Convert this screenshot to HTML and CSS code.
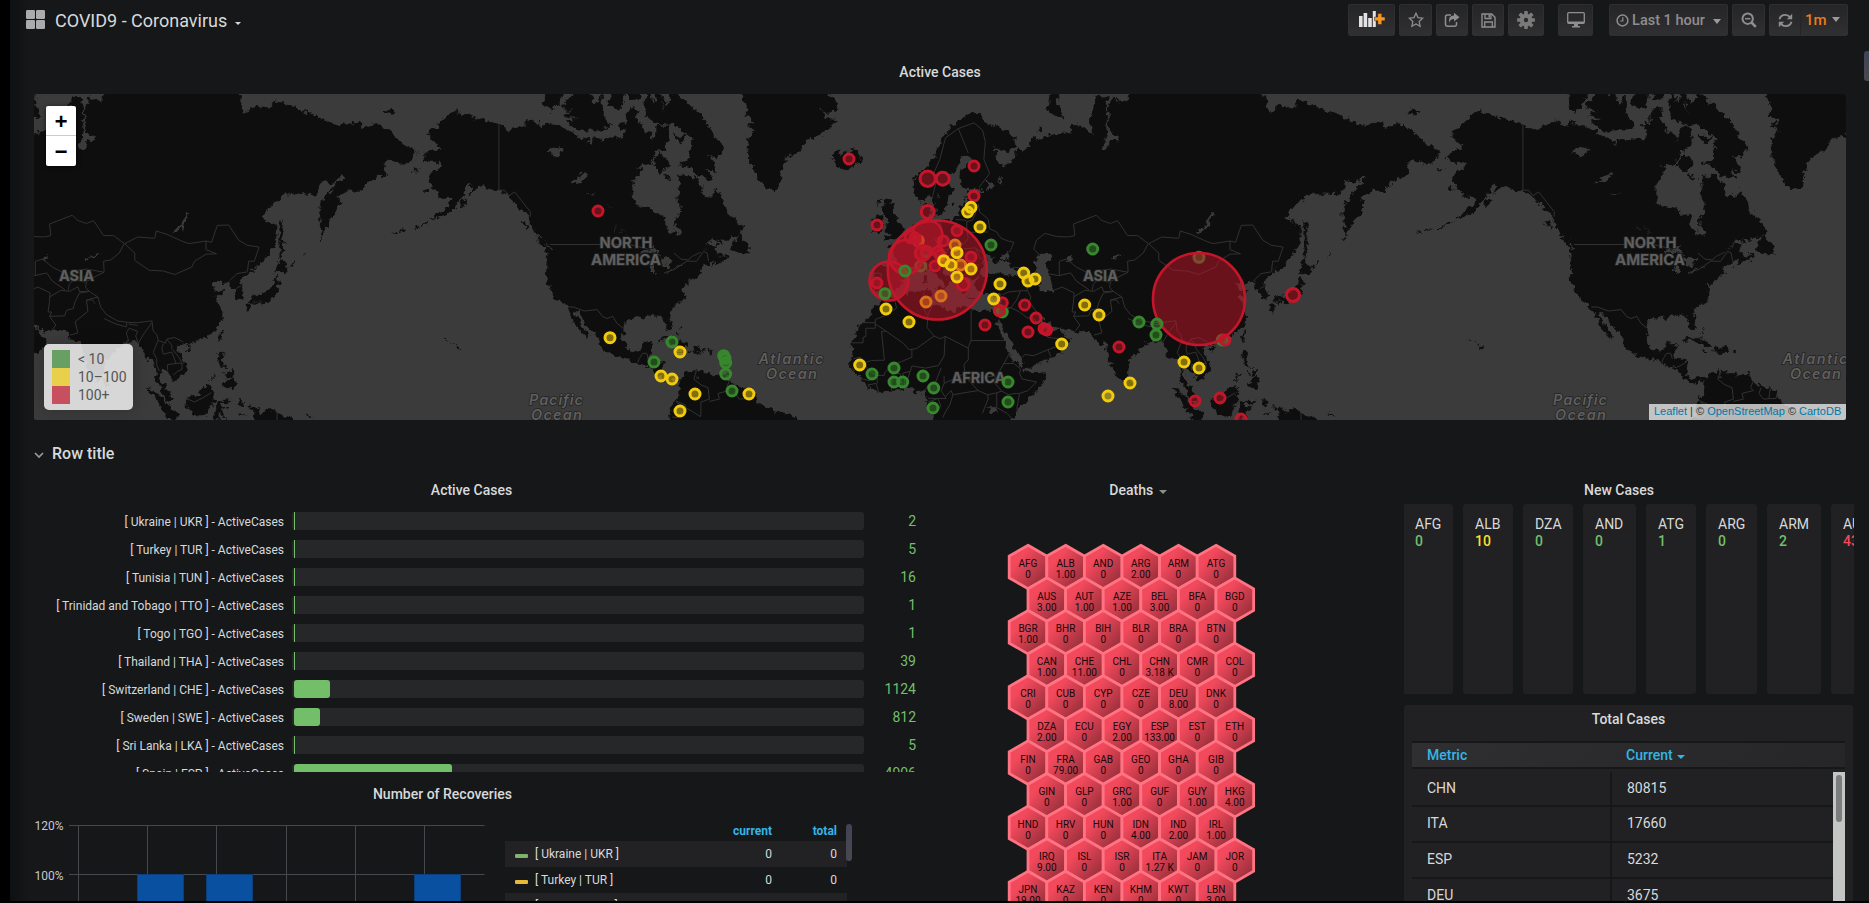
FILE: index.html
```html
<!DOCTYPE html>
<html lang="en">
<head>
<meta charset="utf-8">
<title>COVID9 - Coronavirus</title>
<link rel="stylesheet" href="styles.css">
</head>
<body>
<div class="app">
  <header class="navbar">
    <svg class="grid-icon" viewBox="0 0 19 19"><rect width="9" height="9" rx="1.2"/><rect x="10" width="9" height="9" rx="1.2"/><rect y="10" width="9" height="9" rx="1.2"/><rect x="10" y="10" width="9" height="9" rx="1.2"/></svg>
    <span class="dash-title">COVID9 - Coronavirus</span><i class="caret caret-title"></i>
    <nav class="tools">
      <button class="btn w47"><svg width="26" height="18" viewBox="0 0 26 18"><g fill="#e3e3e3"><rect x="0" y="5" width="3.6" height="11"/><rect x="4.6" y="2" width="3.6" height="14"/><rect x="9.2" y="7" width="3.6" height="9"/><rect x="13.8" y="0" width="3" height="16"/></g><path d="M18.800 2.500h4v3.500h3.200v3.800h-3.200v3.700h-4v-3.700h-3.300v-3.800h3.300z" fill="#f79520" stroke="#29292b" stroke-width=".5"/></svg></button>
      <button class="btn w33"><svg width="16" height="16" viewBox="0 0 16 16"><path d="M8 1.300l2 4.300 4.700.6-3.500 3.300.9 4.700L8 11.900l-4.100 2.300.9-4.700L1.300 6.200 6 5.600z" fill="none" stroke="#8e8e8e" stroke-width="1.300"/></svg></button>
      <button class="btn w32"><svg width="16" height="16" viewBox="0 0 16 16"><path d="M7 3H3.500Q1.500 3 1.500 5v7.200q0 2 2 2h7q2 0 2-2V10" fill="none" stroke="#8e8e8e" stroke-width="1.500"/><path d="M10 .8l5.500 4.400L10 9.600V7Q6 6.800 5.500 11 3.500 4 10 3.600z" fill="#8e8e8e"/></svg></button>
      <button class="btn w32"><svg width="15" height="15" viewBox="0 0 15 15"><path d="M1 1h9.700L14 4.300V14H1z" fill="none" stroke="#8e8e8e" stroke-width="1.400"/><path d="M4 1v4.500h6V1M3.700 14V9h7.600v5" fill="none" stroke="#8e8e8e" stroke-width="1.300"/><path d="M7.500 1.500h1.500V4.500h-1.500z" fill="#8e8e8e"/></svg></button>
      <button class="btn w36"><svg width="18" height="18" viewBox="-9 -9 18 18"><g fill="#7b7b7b"><circle r="6.300"/><g id="tooth"><rect x="-1.800" y="-8.900" width="3.600" height="17.800" rx=".6"/><rect x="-8.900" y="-1.800" width="17.800" height="3.600" rx=".6"/></g><use href="#tooth" transform="rotate(45)"/></g><circle r="2.200" fill="#2c2c2e"/></svg></button>
      <button class="btn w35"><svg width="18" height="16" viewBox="0 0 18 16"><rect x=".7" y=".7" width="16.600" height="10.600" rx="1" fill="none" stroke="#8e8e8e" stroke-width="1.300"/><path d="M1 9.500h16v2H1zM7 12h4v2h2v1.400H5V14h2z" fill="#8e8e8e"/></svg></button>
      <button class="btn w119"><svg width="13" height="13" viewBox="0 0 13 13"><circle cx="6.500" cy="6.500" r="5.400" fill="none" stroke="#8e8e8e" stroke-width="1.500"/><path d="M6.800 3.300v3.700H4.200" fill="none" stroke="#8e8e8e" stroke-width="1.200"/></svg><span class="range">Last 1 hour</span><i class="caret caret-range"></i></button>
      <button class="btn w33"><svg width="16" height="16" viewBox="0 0 16 16"><circle cx="6.700" cy="6.700" r="5.200" fill="none" stroke="#8e8e8e" stroke-width="2"/><path d="M10.500 10.500l4.300 4.300" stroke="#8e8e8e" stroke-width="2.600"/><path d="M4 6.700h5.400" stroke="#8e8e8e" stroke-width="1.500"/></svg></button>
      <div class="btn refresh"><span class="refresh-icon"><svg width="15" height="15" viewBox="0 0 15 15"><path d="M1.500 6.200Q2.600 1.900 7.300 1.900q2.800 0 4.700 2.200M13.500 8.800q-1.100 4.300-5.800 4.300-2.800 0-4.700-2.200" fill="none" stroke="#8e8e8e" stroke-width="1.900"/><path d="M14.200.8v5.400H8.800zM.8 14.200V8.800h5.400z" fill="#8e8e8e"/></svg></span><span class="interval">1m<i class="caret caret-range"></i></span></div>
    </nav>
  </header>

  <section class="map-panel">
    <h2 class="panel-title">Active Cases</h2>
    <div class="map">
      <svg id="map" width="1812" height="326" viewBox="34 94 1812 326"></svg>
      <div class="zoom"><span>+</span><span>−</span></div>
      <div class="map-legend"><div><i class="g"></i>&lt; 10</div><div><i class="y"></i>10–100</div><div><i class="r"></i>100+</div></div>
      <div class="attribution"><a>Leaflet</a> | © <a>OpenStreetMap</a> © <a>CartoDB</a></div>
    </div>
  </section>

  <div class="row-title"><svg width="10" height="7" viewBox="0 0 10 7"><path d="M1 1l4 4 4-4" fill="none" stroke="#9a9a9a" stroke-width="1.700"/></svg><span>Row title</span></div>

  <main class="panels">
    <div class="col-left">
      <h2 class="panel-title">Active Cases</h2>
      <div class="gauges" id="gauges"></div>
      <h2 class="panel-title recov-title">Number of Recoveries</h2>
      <div class="recoveries">
        <svg width="460" height="86" viewBox="30 816 460 86" class="graph">
          <g stroke="#47484b" stroke-width="1"><path d="M69 825.500H484.500M69 874.500H484.500M78.500 825V902M147.500 825V902M216.500 825V902M286.500 825V902M355.500 825V902M424.500 825V902"/></g>
          <g fill="#0a50a1" stroke="#0b3f7d"><path d="M137.500 874.500h46V904h-46zM206.500 874.500h46V904h-46zM414.500 874.500h46V904h-46z"/></g>
          <text x="63.500" y="829.500" text-anchor="end">120%</text><text x="63.500" y="879.500" text-anchor="end">100%</text>
        </svg>
        <div class="series">
          <div class="series-head"><span></span><b>current</b><b>total</b></div>
          <div class="series-row odd"><i class="dash green"></i><span>[ Ukraine | UKR ]</span><em>0</em><em>0</em></div>
          <div class="series-row"><i class="dash yellow"></i><span>[ Turkey | TUR ]</span><em>0</em><em>0</em></div>
          <div class="series-row odd"><i class="dash blue"></i><span>[ Tunisia | TUN ]</span><em>0</em><em>0</em></div>
        </div>
        <div class="series-scroll"></div>
      </div>
    </div>

    <div class="col-mid">
      <h2 class="panel-title">Deaths <i class="caret caret-panel"></i></h2>
      <svg id="hexes" width="260" height="370" viewBox="1000 533 260 370"></svg>
    </div>

    <div class="col-right">
      <h2 class="panel-title">New Cases</h2>
      <div class="cards">
        <div class="card c50">AFG<b>0</b></div><div class="card c50">ALB<b class="mid">10</b></div><div class="card c50">DZA<b>0</b></div><div class="card c53">AND<b>0</b></div><div class="card c50">ATG<b>1</b></div><div class="card c51">ARG<b>0</b></div><div class="card c54">ARM<b>2</b></div><div class="card c54">AUT<b class="high">431</b></div>
      </div>
      <div class="totals">
        <h2 class="panel-title">Total Cases</h2>
        <div class="thead"><span>Metric</span><span>Current<i class="caret caret-sort"></i></span></div>
        <div class="tbody">
          <div class="trows">
            <div class="trow"><span>CHN</span><span>80815</span></div>
            <div class="trow"><span>ITA</span><span>17660</span></div>
            <div class="trow"><span>ESP</span><span>5232</span></div>
            <div class="trow"><span>DEU</span><span>3675</span></div>
          </div>
          <div class="tscroll"><i></i></div>
        </div>
      </div>
    </div>
  </main>
  <div class="page-scroll"></div>
  <div class="bottom-edge"></div>
</div>
<script src="app.js"></script>
</body>
</html>
```

FILE: styles.css
```css
* { box-sizing: border-box; }
html, body { margin: 0; height: 100%; background: #000; overflow: hidden; }
body { font-family: Roboto, "Noto Sans", sans-serif; font-size: 14px; color: #d8d9da; }
.app {
  position: relative; width: 1869px; height: 903px; overflow: hidden;
  padding-left: 34px; display: flex; flex-direction: column;
  background: linear-gradient(90deg, #000 10px, #0f1011 10px, #161719 30px);
}
.navbar { flex: none; height: 60px; padding: 4px 21px 0 0; margin-left: -8px; display: flex; align-items: flex-start; }
.grid-icon { width: 19px; height: 19px; margin-top: 6px; fill: #aaabad; }
.dash-title { font-size: 18px; line-height: 34px; margin-left: 10px; margin-right: 9px; white-space: nowrap; width: 171px; }
.caret { display: inline-block; width: 0; height: 0; border: 4.500px solid transparent; border-bottom: 0; border-top-color: currentColor; }
.caret-title { border-width: 3.500px 3px 0; margin-top: 18px; }
.tools { margin-left: auto; display: flex; }
.btn {
  height: 32px; margin: 0 0 0 4px; padding: 0; border: 1px solid #2f2f32; border-radius: 2px;
  background: linear-gradient(180deg, #252527, #303033); color: #8e8e8e; font: 500 15px Roboto, sans-serif;
  display: flex; align-items: center; justify-content: center;
}
.w47 { width: 47px; } .w33 { width: 33px; } .w32 { width: 32px; } .w36 { width: 36px; }
.w35 { width: 35px; margin-left: 14px; } .w119 { width: 119px; margin-left: 16px; }
.range { margin-left: 3px; margin-right: 1px; font-size: 14.500px; white-space: nowrap; }
.caret-range { border-width: 5px 4.500px 0; margin-left: 7px; margin-top: 2px; color: #9a9a9a; }
.refresh { width: 79px; justify-content: flex-start; }
.refresh-icon { width: 31px; height: 30px; display: flex; align-items: center; padding-left: 8px; border-right: 1px solid #252527; }
.interval { color: #eb7b18; display: flex; align-items: center; padding-left: 4px; }
.interval .caret { margin-left: 5px; margin-top: -2px; }

.panel-title { margin: 0; font-size: 14px; font-weight: 500; line-height: 24px; height: 24px; text-align: center; color: #d8d9da; }
.map-panel { flex: none; width: 1812px; }
.map-panel .panel-title { height: 34px; }
.map { position: relative; width: 1812px; height: 326px; overflow: hidden; border-radius: 2px; }
.map svg { display: block; }
.map text { font-family: Inter, "Open Sans", sans-serif; font-size: 14px; font-weight: 700; fill: #5f5f5f; stroke: #222; stroke-width: 1.500px; paint-order: stroke; }
.map text.sea { font-style: italic; font-weight: 600; font-size: 14.500px; }
.zoom { position: absolute; left: 12px; top: 12px; width: 30px; height: 60px; background: #fff; border-radius: 2px; box-shadow: 0 1px 5px rgba(0,0,0,.65); }
.zoom span { display: block; height: 30px; text-align: center; color: #000; font: 700 22px/35px "Liberation Mono", monospace; }
.zoom span:first-child { border-bottom: 1px solid #ccc; }
.map-legend { position: absolute; left: 10px; top: 250px; width: 89px; height: 66px; padding: 6px 0 6px 8px; background: rgba(255,255,255,.8); border-radius: 5px; box-shadow: 0 0 15px rgba(0,0,0,.2); color: #555; font-size: 14px; line-height: 18px; white-space: nowrap; }
.map-legend div { display: flex; }
.map-legend i { flex: none; width: 18px; height: 18px; margin-right: 8px; }
.map-legend .g { background: #689f62; } .map-legend .y { background: #e8d04a; } .map-legend .r { background: #c84f5e; }
.attribution { position: absolute; right: 0; bottom: 0; height: 16px; width: 197px; padding-left: 5px; background: rgba(255,255,255,.7); color: #333; font: 11px/15px "Liberation Sans", Arial, sans-serif; white-space: nowrap; }
.attribution a { color: #0078a8; }

.row-title { flex: none; height: 58px; display: flex; align-items: center; padding-top: 8px; font-size: 16px; font-weight: 500; }
.row-title span { margin-left: 8px; }
.row-title svg { margin-top: 4px; }

.panels { flex: 1; min-height: 0; display: grid; grid-template-columns: 966px 404px 451px; padding-bottom: 2px; overflow: hidden; }
.col-left > .panel-title { width: 875px; }
.gauges { height: 261px; padding-top: 1px; margin-top: 9px; overflow: hidden; width: 890px; }
.gauge { display: flex; align-items: center; height: 18px; margin-bottom: 10px; }
.gauge-label { width: 250px; text-align: right; font-size: 12px; line-height: 18px; padding-top: 1px; white-space: nowrap; }
.gauge-track { margin-left: 8px; width: 572px; height: 18px; border-radius: 3px; background: #262729; padding-left: 2px; }
.gauge-fill { height: 18px; background: #73bf69; border-radius: 3px; }
.gauge-fill.thin { border-radius: 0; }
.gauge-value { width: 52px; text-align: right; color: #73bf69; font-size: 14px; }
.col-left > .recov-title { width: 817px; margin-top: 10px; }
.recoveries { display: flex; height: 86px; margin-top: 10px; overflow: hidden; }
.graph { flex: none; margin-left: -4px; }
.graph text { font-size: 12px; fill: #c7c8c9; }
.series { width: 342px; margin-left: 15px; padding-top: 5px; font-size: 12px; }
.series-head { height: 20px; line-height: 20px; display: flex; color: #33b5e5; padding-right: 10px; }
.series-head span { flex: 1; }
.series-head b, .series em { font-style: normal; width: 65px; text-align: right; }
.series-head b { font-weight: 700; }
.series em { font-weight: 400; }
.series-row { height: 26px; line-height: 26px; display: flex; align-items: center; padding: 0 10px; }
.series-row.odd { background: #222224; }
.series-row span { flex: 1; margin-left: 7px; }
.dash { width: 13px; height: 4px; margin-top: 3px; border-radius: 1px; }
.dash.green { background: #7eb26d; } .dash.yellow { background: #eab839; } .dash.blue { background: #6ed0e0; }
.series-scroll { width: 6px; height: 37px; margin: 8px 0 0 -1px; border-radius: 3px; background: linear-gradient(#404357, #48494e); }

.col-mid .panel-title { width: 276px; }
.caret-panel { color: #8e8e8e; margin-left: 2px; vertical-align: 1.500px; }
#hexes { display: block; margin-top: 31px; }
#hexes text { font-size: 10px; text-anchor: middle; fill: #16080b; }

.col-right { width: 450px; overflow: hidden; }
.col-right > .panel-title { width: 430px; }
.cards { display: flex; gap: 10px; margin-top: 2px; height: 190px; overflow: hidden; margin-left: -1px; }
.card { flex: none; background: #212124; border-radius: 3px; padding: 12px 0 0 12px; line-height: 17px; font-size: 14px; overflow: hidden; }
.card b { display: block; font-weight: 500; color: #73bf69; }
.card .mid { color: #fade2a; } .card .high { color: #f2495c; }
.c50 { width: 50px; } .c51 { width: 51px; } .c53 { width: 53px; } .c54 { width: 54px; }
.totals { margin-top: 11px; width: 449px; height: 220px; background: #212124; border-radius: 3px 3px 0 0; padding: 2px 8px 0; }
.thead { height: 28px; margin-top: 10px; border: solid #161719; border-width: 2px 0; background: linear-gradient(135deg, #2f2f32, #262628); color: #33b5e5; font-weight: 500; line-height: 24px; display: flex; }
.thead span:first-child { width: 199px; }
.thead span { padding-left: 15px; }
.caret-sort { margin-left: 4px; vertical-align: 1.500px; }
.tbody { display: flex; margin-top: 3px; height: 132px; overflow: hidden; }
.trows { width: 421px; }
.trow { height: 36px; display: flex; border-bottom: 2px solid #161719; line-height: 33px; }
.trow:first-child { height: 35px; line-height: 32px; }
.trow span { padding-left: 15px; }
.trow span:first-child { width: 200px; border-right: 2px solid #161719; }
.tscroll { width: 12px; background: #c4c6c4; padding: 3px; }
.tscroll i { display: block; height: 47px; border-radius: 3px; background: #7b7c7e; }
.page-scroll { position: absolute; right: 0; top: 51px; width: 5px; height: 30px; border-radius: 3px 0 0 3px; background: linear-gradient(#404357, #48494e); }
.bottom-edge { position: absolute; left: 0; right: 0; bottom: 0; height: 2px; background: #000; }
```

FILE: app.js
```javascript
// Web-mercator projection, one world copy is 1024px wide.
function project(lon, lat) {
  const x = 900 + lon * 2.84444;
  const y = 404.8 - 162.97 * Math.log(Math.tan(Math.PI / 4 + lat * Math.PI / 360));
  return x.toFixed(1) + ' ' + y.toFixed(1);
}
function toPath(src, close) {
  return src.trim().split('\n').map(line => {
    const pts = line.trim().split(/[; ]+/).filter(Boolean).map(p => project(...p.split(',').map(Number)));
    return 'M' + pts.join('L') + (close ? 'Z' : '');
  }).join('');
}

const land = `
-168,65.6;-166.5,64.6;-163,64.5;-161,64.7;-161,63.5;-164.5,63.1;-166,61.7;-164,60.6;-165,60.3;-162,59.8;-162,58.7;-160,58.9;-158.5,58.8;-157.3,58.7;-158,57.5;-161,56;-163.5,55;-165,54.5;-162,55;-159,55.7;-156.5,57;-154,58.5;-153.5,59.5;-151.8,60.9;-150,61.3;-151.5,59.3;-149.5,59.8;-147.5,61;-144.5,60.1;-141,59.9;-139,59.5;-136.5,58.3;-134,57;-132,56;-130.3,54.8;-130,53.6;-128.3,52.2;-127.5,51.2;-125,50;-123,49;-122.5,47.5;-124.7,48.3;-124,46;-124.2,43;-124.3,40.3;-123.7,38.9;-122.4,37.2;-120.6,34.6;-118.4,34;-117.1,32.5;-116,30.3;-114.2,28.5;-115,27.8;-112.2,25;-110,23;-109.5,23.4;-111,25.5;-112.7,27.8;-114.7,31;-113,31.1;-111,28;-109,26;-107,24.3;-105.5,22;-105.3,20.5;-104,19;-101.5,17.7;-98,16.2;-94.8,16.2;-93,15;-91,13.9;-87.7,13;-86.5,12;-85.7,10.6;-84,9.5;-83,8.3;-80.5,7.3;-79.5,8.9;-78,8.2;-77.4,6.7;-77.4,4;-79,1.7;-80,0;-80.8,-2;-80.2,-3.3;-81.3,-5;-81,-8;-35,-8;-35.2,-6;-37,-4.9;-39.5,-3;-42,-2.8;-44.3,-2.5;-46,-1;-48,-.8;-50.2,0.5;-51.5,4;-54,5.9;-57.5,6.2;-60,8.5;-62,10;-62,10.7;-65,10.2;-68,10.7;-70,12;-71.5,10.9;-72,12;-74.2,11.2;-75.5,10.5;-76.8,8.6;-77.5,8.7;-79.5,9.6;-82,9;-83.6,10.8;-83.5,13;-83.2,15;-86,15.9;-88.6,15.8;-88,18.3;-87,21.4;-90.4,21.1;-91,18.7;-94.5,18.1;-96.2,19.3;-97.6,22;-97.3,26;-97,28;-95,29.2;-93,29.7;-90,29.1;-89,30.4;-85.5,30;-84,30;-82.7,28;-81.8,26;-80.5,25.2;-80.1,27;-81.4,30.5;-79,33.2;-76,34.9;-76,36.9;-76.4,39;-75,38.8;-74,40.3;-72,41;-70,41.8;-70.7,43.2;-67,44.8;-64.5,45.4;-66,43.6;-63.5,44.7;-60.2,46;-61.5,46;-64,46;-65,48;-64.3,48.8;-67,49.1;-70,47;-67,49.8;-66,50.2;-60,50.2;-56,51.6;-55.7,53;-58,54;-57.5,54.5;-60,55.3;-61.5,56.5;-62,57.8;-63.5,59;-64.5,60.3;-66,58.8;-69.5,58.9;-70,60.5;-70,61;-73,62.3;-78,62.4;-77.5,60;-78.5,58.5;-76.7,57;-77,55.5;-79.3,54.6;-79,51.5;-80.5,51.2;-82.3,53;-82.3,55;-85,55.3;-88,56.5;-92.5,57;-94.7,59;-94.5,60.5;-92,62.8;-90.5,63.5;-93,64;-88,64.2;-86.5,65.5;-86,66.3;-83.5,66.3;-81.5,67.5;-82,69.5;-85.5,69.5;-85.5,68.5;-87,67.5;-88,68.8;-90.5,68.7;-91,69.6;-93,70.5;-92,71.2;-94,71.8;-96,71;-96,69;-98,68;-102,67.7;-108,68;-108,66.8;-110,67.8;-114,68;-115,68.8;-119,69.3;-124.5,70;-126,69.4;-128,70;-130,70.1;-133,69.4;-135,69.2;-138,69;-141,69.7;-148,70.4;-153,70.8;-156.5,71.3;-162,70;-163,69.3;-166,68.7;-164,67.5;-162,67;-161.5,66.3;-164,66.5
-117,70;-113,69;-105,69;-101.5,69.5;-105,71;-105,73;-107,72;-109,73;-115,73.3;-119,71.6;-115,71.3;-118,70.7;-113,70.5
-125,72;-123,71.2;-120,72;-117,74;-121,74.5;-125,74
-99,69.5;-96,68.6;-95.5,69.5;-98,70
-102.5,72;-98,71.5;-97,73.5;-101,73.8
-95.5,72.5;-92,72.6;-90.5,74;-95,74
-89.5,71;-88,70.3;-84,69.8;-79,69.7;-77,69;-73,68;-73,66.5;-74.5,64.7;-78,64.5;-74,63.8;-71.5,62.5;-66,62;-68.5,63.7;-64.7,62.9;-66,64.7;-68,65.8;-64.5,65.2;-63,66;-62,66.7;-65,68.2;-68,69.8;-70,70.7;-72,71.3;-77,72.8;-81,73.7;-80,72.5;-82,72;-85.5,73.7;-86,72;-89,73.3
-87,64;-84.5,63;-81,64;-82.5,65;-84,66;-85.5,65.6
-79.7,68.2;-75,68.2;-77,67.3
-83,62.7;-80,62;-82,61.9
-59.3,47.7;-55.5,46.8;-53,46.8;-53,48.5;-55.5,50;-56,51.6;-57.5,50.5
-64.3,47;-62.2,46.4;-63.8,46.2
-61,47;-60,46;-61.3,45.6
-64.4,49.9;-61.8,49.1;-64,49.3
-128,50.7;-125,48.6;-123.5,48.4;-125,50
-133,54;-131.7,54;-131.2,52.2
-154.5,57;-152.5,57.5;-152.3,58.4;-154,58
-166,54;-168.5,53.2;-166.5,53.5
-169,52.9;-171,52.5;-169,52.6
-174,52.3;-176,51.9;-174,52
-177,51.9;-178.5,51.7;-177,51.7
-166,60.3;-167,60;-165.5,59.9
-171.5,63.6;-169,63.3;-171,63.2
-73,78;-68,76;-60,76;-57,74.5;-55,72.5;-53,71.5;-54.5,70.9;-51,70;-54,69.5;-50.5,69;-53,68.2;-53.5,67;-53,65;-51.5,63.5;-50,62;-48,60.8;-44,59.9;-42.7,61;-42,62.8;-40.5,64.5;-40,65.3;-37,65.8;-35,66.3;-33,67.7;-29,68.3;-26,68.8;-22,70.3;-26,70.4;-28,71.5;-24.5,71;-21.8,71.5;-23,72.8;-27,73.2;-21,73.5;-19.5,75;-18,78
-24.3,65.5;-22,66.4;-21,65.5;-18,66.1;-16,66.5;-13.7,65;-15,64.3;-18.7,63.4;-22.5,63.9;-22,64.7;-24,64.9;-22,65.3
-85,21.9;-83,23;-80.5,23.1;-77,21.8;-74.2,20.2;-77.5,19.9;-78,20.8;-82,22.5
-74.4,18.4;-72.5,18.6;-73,19.9;-70,19.8;-68.4,18.6;-71,18
-78.3,18.5;-76.3,18.1;-77.3,17.8
-67.2,18.5;-65.6,18.4;-66,18;-67.2,18
-78,25;-77.5,24;-78.2,24.3
-77.3,26.6;-77,26;-77.5,26.3
-156,20.2;-155,19.5;-155.7,19
-157,21;-156.2,20.7;-156.7,20.6
-158.2,21.6;-157.7,21.3;-158.1,21.3
-159.7,22.2;-159.3,21.9;-159.6,21.9
-62,10.8;-61,10.8;-61,10.1;-61.8,10.1
5,61.8;5,60.5;5.5,59;7,58;8.5,58.2;10.5,59.3;11.3,58.8;12,57.5;12.8,56;13,55.4;14.3,55.5;16,56.3;16.8,58.6;18.8,60;17.3,61;17.5,62.5;19.5,63.5;21,64.5;22,65.8;25,65.3;25,64.8;21.5,63;21.3,61;23,59.9;28,60.5;30,59.9;28,59.5;23.5,59.2;24.4,58.3;24,57.1;22.5,57.6;21,56.8;21,55.3;19.5,54.4;16,54.4;14.3,53.9;11,54;9.8,55;10.9,56.5;10.5,57.6;8.2,57;8.3,55;8.8,53.8;7,53.5;5,53.3;3.5,51.4;1.6,50.9;1.5,50.1;-1.5,49.7;-1.6,48.7;-4.7,48.4;-2.5,47.3;-1.2,46;-1.5,43.5;-8,43.7;-9.2,43;-8.8,41;-9.4,38.7;-8.8,37;-6.5,37;-5.5,36;-2.2,36.8;-.5,38;0,39;0,40;3.2,41.8;3,43.2;6,43.1;8.8,44.4;10.3,43.5;12.4,41.7;15.6,40;16,38;17,39;16.7,40.4;18.4,40;16,41.7;13.6,43.6;12.4,45.3;13.7,45.6;15,44.5;19,42;19.4,40.5;21.5,38.2;21.7,36.8;23.2,36.5;24,38;22.8,39.5;23,40.4;26,40.8;29,41;28,43;29.6,45;31,46.6;33,46;32.6,45.4;34,44.4;36.5,45.3;35,46.2;37,46.9;39,47.2;38,46.5;37,45.2;39.5,43.7;41.6,42;41,41;36,41.3;33,42;31,41.1;29.2,41.1;27,40.3;26.3,39;27.3,37;30.5,36.8;32.5,36.1;36,36.8;35.8,35;34.4,31.4;32.5,31.2;30,31.3;25,31.6;22,32.8;20,32;19.5,30.5;15.5,31.5;15,32.4;11,33.2;10.2,34.5;11,37;9.5,37.3;3,36.8;-2,35.1;-5.5,35.8;-6.5,34;-9.5,32;-9.8,30;-12.8,27.8;-16,24;-17,21;-16.3,19;-17.4,14.7;-16.6,12.3;-15,11;-13.2,9;-12.5,7.6;-9,5;-7.5,4.4;-3,5.1;1,6;4.4,6.3;6,4.3;8.8,4.6;9.7,3;9.5,1;9,-1;11.5,-4;13,-9;39.5,-9;39,-5;41,-2;44,1.2;47.5,4.3;49.5,7;51.2,10.5;51.1,11.9;47,11.2;43.2,11.5;42.8,13;39.5,15.3;37.3,19;37,21;35.5,24;32.6,29.7;32.4,29.9;33.8,27.9;34.9,29.5;35.2,28;37,25.3;39,22;40.5,19.8;42.7,16.5;43.4,12.7;45,12.8;49,14.2;52.2,16;55.3,17.5;57.8,19;59.8,22.5;56.5,24.4;56.3,26.2;54,24.2;51.6,24.2;51.3,26;50.2,25.8;50,27;48,29.8;50,30.2;51.5,27.8;54.5,26.6;57,27;57.6,25.7;61.6,25.1;66.5,25.3;67.5,23.9;69,22.3;70.5,20.8;72.5,21.8;72.8,19;73.5,16;74.8,13;76.3,9.8;77.5,8.1;79,9.2;80,11;80.2,13.5;80.3,15.6;82.2,16.7;85,19.4;87,21.3;90,22;91.8,22.5;92.5,20.7;94.3,18.5;94.3,16;96.5,16.5;97.7,15;98.6,12;98.3,8.3;100.3,6.2;101.3,2.9;103.5,1.3;104.2,1.6;103.4,4;102,6.3;100.2,8.5;99.3,11;100,13.3;101,12.7;103,11;105,8.7;106.8,10.4;109.2,11.8;109,14;106.5,17.8;105.8,19.5;108,21.6;110,20.3;110.5,21.3;114,22.4;117.5,24;119.6,26;121.8,29;121.5,31;120,33.5;119.3,35;122.4,37.2;119,37.3;118,39;121.5,40.7;121.5,39;124.5,39.9;125.3,38;126.5,36.5;126.5,34.4;129.2,35.3;129.4,37;127.6,39.5;129.8,41;131,42.8;133.5,43;136,45;140,48.5;140.5,50.5;141,53;137.8,54;135.3,54.8;138,56.5;143,59.3;147,59.4;150,59.5;155,59.3;157,61.8;160,61;163,62.5;164.5,62.3;160,60;157,57.8;155.6,56;156.8,51;158.5,53;160,54.5;162,56;163.2,58;162,58.5;166,60;170.5,60;173,61.5;177,62.5;179.5,62.5;178,64.3;181,65;184,64.4;187.5,64.5;190,66.1;185.5,67;180,69;176,69.8;170.5,69.2;170,70;161,69.5;160,70;152,71;140,72.5;139,71.6;133,71.8;130,71;127,73.4;113.5,73.8;113,76;104,77.7;95,76;87,75;80.5,73.6;80,72.2;77.5,72.3;74.8,72.8;73.3,71.2;74,68.8;77,68;77,67.6;73.7,67.8;73.8,66.8;72,66.3;70.8,66.5;72.8,68.5;72.6,71;72.8,72.7;69.8,72.9;67,71;67,69.5;68.5,68.2;64.5,69.3;60.5,69.8;60,68.7;57,68.6;54,68.4;50,68;48,67.7;46,68.2;46,66.8;43.5,66.1;42,66.5;40,65.5;39.8,64.6;36.5,64;34.8,64.4;32.5,67;38,66.1;41,66.8;40.5,67.8;36,69.1;31,69.7;28,71;25,71;20,70;17.5,69;14,67.3;12,65;9,63.7
-5.5,50.1;-3.5,50.3;1,50.9;1.5,52.6;0.2,53;-1.5,55;-3,56;-2,57.6;-4,57.7;-3,58.6;-5,58.5;-6,56.7;-5,54.8;-3,54;-4.5,53.2;-5,51.8;-3,51.4
-10,51.7;-6.3,52.3;-6,54;-6,55.2;-8.5,55;-10,54;-9,53
-7.2,58.2;-6.3,58.3;-7.5,57
12.5,38;15.5,38.2;15,36.7
8.3,41;9.7,41;9.5,39.2;8.5,39
8.7,42.4;9.4,43;9.4,41.5
23.6,35.4;26.2,35.2;24.8,34.9
32.4,35;34.4,35.6;33.6,34.8
11,55.7;12.5,56;12.1,55
22,58.5;23.2,58.5;22.5,58
18.2,57.3;19,57.9;18.5,57
52,71.5;54,70.7;57.5,70.6;55.5,72;55.5,73;58,75.3;64,76;56,76;53,73.5
48.5,69.5;50,69.1;48.7,68.7
178.7,71.1;181,71.5;182.5,71.2;181,70.8
142,54.3;142.8,53.5;143.2,52;143,50;144.5,49;143,49.2;142.7,47.5;143.3,46.3;142,46;142,49
140,42;141,43.3;141.8,45.4;143,44.3;145.3,43.5;143.2,42;141,42.4
141.3,41.4;142,39.5;140.8,38;140.8,36;139.8,35;138.5,34.7;136,33.6;135,34.5;133,34.3;131,34;132.7,35.5;136,35.8;137,37.3;138.5,37.3;139.8,38.8;140,40.5
130,33.5;131.8,33.3;131.2,31.3;130.2,31.3
132.5,33.8;134.5,34.2;133.5,33
146,44.3;148,45.3;146.5,44.3
150,46.2;151,47;150,46.5
155.2,50.1;156,50.7;155.8,50.2
120.1,23;121.5,25.2;120.9,22
108.7,19.2;110.5,20;110,18.5
120.3,16;120.6,18.5;122.2,18.4;121.6,16;122,14;124,13;121,13.7
122,11.8;123,10;124,11;125.5,12;125,10.2;123.5,9.5
122,7;124,8.5;125.5,9.7;126.3,7.5;125.5,6;124,6
117.3,8.4;119.5,11.2;119.2,10.3
109,1.5;111.3,2.5;113.5,3.5;116.8,7;119,5.2;117.7,3;119,1;117.5,0;116.4,-3.5;114.5,-4;111.5,-3.3;110,-1.5
95.3,5.6;97.5,5.2;100.3,2.5;103.5,-.5;106,-3;105.8,-5.8;104,-5.5;101,-2.5;98.7,1.7
119,-3;120,1;125,1.6;124,.4;120.5,.5;121,-1;123.3,-1;121.5,-2;122.5,-4.5;120.3,-3;120.3,-5.6;119.5,-5.5
127.6,0;128,2;128.7,1;128.2,-.5
128,-3.2;130.5,-3.2;129,-3.5
131,-.8;134,-.8;135,-3.3;138,-1.7;141,-2.6;145,-4.2;148,-6;148,-8;135,-8;132.8,-4;134,-3
150.8,-2.7;153,-4.5;152.3,-4.2
79.8,8;80.2,9.7;81.8,7.5;80.5,6`;

const water = `
47,45;50,46.8;53,46.8;53,45;51,44.5;52.5,41.7;53.9,37;51,36.7;49,37.7;49.5,40.3;47.6,42.8
58.5,45;59.5,46.3;60.5,46.5;59.5,44.7
103.7,51.5;106,51.8;108.5,53.2;109.8,55.7;109,55.7;107.5,53.6
30.5,60;33,60.8;30.5,61.7
34.5,61.7;36,61;35.5,62.5
12.5,58.6;14,58.9;13.5,59.3
74,45.5;79,46.5;75,46.6
31.8,-1;34,-.3;33.5,-2.5;32,-2.5
-92,46.7;-89,48.2;-86,48.7;-84.6,46.6;-88,47.3
-87.8,42;-86.3,42;-86,44;-85,45.8;-87.5,45
-84.5,45.9;-80,45.5;-81.7,43.3;-83.4,44
-83.3,41.6;-79,42.8;-81,42.8
-79.7,43.3;-76.3,44;-76.5,43.4
-98.5,53.5;-96.3,50.5;-97.2,52
-116,61.2;-111,62.8;-109.5,62.8;-112,61.3
-124,66;-121,66.8;-118,66.6;-121,65.2;-122,65.8
-111,59.2;-106.5,59.3;-109,59.5
-102.5,58;-101.5,56.5;-102,57
-101,53.5;-99.5,51.5;-100,52.5
-72.3,10.8;-71,10;-71.8,9.3
-84,72.5;-83,71;-83.3,72
-77,51;-79,54;-79.3,51.5`;

const borders = `
-141,69.7;-141,60;-139,60;-137.5,59;-135.5,59.7;-133.5,58.4;-130,56;-130,55
-123,49;-95,49;-89,48;-84,46.3
-83,42;-79,43;-75,45;-71.5,45;-70,46.5;-69,47.4;-67.8,47;-67.3,45
-79.5,47;-77,45.5;-74.5,45.3;-73,46.2;-70,47.2
-117,32.5;-114.8,32.5;-111,31.3;-106.5,31.7;-104.5,29.6;-103,29;-101,29.7;-99.5,27.5;-97.2,25.9
-92.2,14.6;-91.7,16;-90.5,17.8;-89,17.8;-88.5,16
-87,13;-85,14;-83.3,15
-77.3,8.6;-77.8,7.2
-71.5,12;-72.5,9;-70,7;-67.5,6;-67,2;-70,1;-70,-4
-60,8.3;-61,6;-60,5;-64,4;-63.5,2;-67,1.2
-57.3,6;-58,4;-56.5,2;-52,2.3;-51.6,4
-54,5.7;-54.3,4;-54.5,2.3
-78.8,1.4;-75.5,0;-75.3,-1;-78,-4.5;-80,-4.3
-78.8,1;-75.3,-1;-70,-4.2
49,46.5;47,48;48,50;51,51.5;55,50.8;59,50.7;61.5,51;61,53.5;65,54.4;69,55.3;71,54.2;74,53.6;76.5,54.2;80,51;83.5,51;87.3,49.2;85.5,47;82.5,45.3;80,45;80.2,42.2;74,43;71,42.7;68,41;66,42;62,43.5;58.5,45.5;56,45;56,41.3;52.5,41.7
56,41.3;60,42;62,39.8;66.5,37.4
54,37.3;57,38.2;61.2,36.6;61,34;60.5,31;61.8,31;61,29.7;63.2,27;61.7,25.2
61,29.7;66.3,29.8;67,31.5;69.3,32;70,34;71.5,36.5;75,37;71.5,37;71,38.3;68,37;65,37.3;61.2,35.5
80.2,42.2;77,41;74,39.7;73.7,38;75,37
69.5,41.5;71,40;73.5,39.5
67.5,37.2;68,39;70,40.5;73,41
87.3,49.2;91,47;91,45.2;96,42.7;101,42.5;105,41.6;111,43.5;112,45;116,46.7;119.7,46.8;116,47.8;116,49.8;110,49.2;107,49.9;102.3,51.3;98.5,52;98,50.4;92,50.7;87.5,49.2
116,49.8;118,49.5;120,53.2;124,53.3;127.5,50;130.5,48.8;134.7,48.4;133,45;131,45;130.6,42.4
124.4,40;126.9,41.8;130.6,42.3
126.7,37.8;128.4,38.6
68.2,23.8;71,24.5;70,28;74.5,31.2;74,34.5;78,35.4;75,37
78,35.4;79,32.5;81,30.2;85,28.2;88.8,27.8;92,27.7;97,28.3;97.5,25;98.7,24;99.2,22.1;101.7,21.2;102.2,22.5;105,23;108,21.6
74,34.5;76,34.6;77,33.5
80.2,29;84,27.4;88,26.4;88.2,27.8
88.9,21.7;88,24.5;89,26;92,25;91.3,23.5;92.3,21
88.8,27.3;92,26.9
92.5,21.5;94,24;97,27.7
99.2,22.1;98,19.5;97.5,18;98.7,16;98.7,14;99.6,11.8
101,21;100.5,19.5;101,17.5;104,18.2;105.5,14.4;107.6,14.5;106.5,16.5;104,19.4;104,20.5;102.2,22.4
102.5,12;102.5,14;105.5,14.4
104.5,10.4;106,11.7;107.5,12.3;107.6,14.5
109.6,2;112,1;115,2.5;117.8,4.2
141,-2.6;141,-8
36,36;38,36.8;42.4,37.2;44.8,37.2;44.3,39.8;43.5,41;41.5,41.5
44.8,37.2;46,35.5;45.5,34;48,31;48.5,30
42.4,37.2;41,34.5;39,32.3;42,31;44.7,29.2;46.5,29.1;47.7,28.5
36,32.5;39,32.3;37,31.5;37.5,30;35,29.5
42.8,16.4;44,17.4;47,17;52,19;53,16.7
52,19;55,20;55.5,22.7;52,23;51.5,24.3
39.8,43.5;43,43.2;46,41.8;48.5,41.8
43.5,41;45,41.3;46.5,39;48,38.8
11.5,59;12.5,61;12,63;14,65;16,68;20.5,69.2;24,65.9
20.5,69.2;26,69.9;29,69;30,67.5;29.5,65;31.5,62.8;27.8,60.5
19.5,54.4;22.8,54.3;23.5,54;23.5,52;24,50.5;22.5,49.2
27.5,57.5;28,56;31,54.5;31.5,52.5;34,51.8;35.5,50.4;38,49.8;40,49.5;39,47.8;38.2,47.1
21,56.1;25,56.2;26.6,55.7;25.5,54.3;23.5,54
24,51.7;31,51.8
22.5,48;26.5,48.2;28,46;28.2,45.4
26.5,48.2;29.8,46.4;28.5,45.5
-1.7,43.4;3,42.5
-8.8,42;-6.5,41.8;-7.2,38;-7.4,37.2
3,51;6,49.5;8,49;7.6,47.5;7,46;7.5,43.8
14.2,53.9;15,51;12.3,50.2;13.5,48.7;16.5,48.8;18.8,49.5;22.5,49.1
9.5,47.5;13,47.6;17,48;16,46.7;13.7,46.5;10.5,46.8;7,46
17,48;22,48;20.5,46.2;16.5,46.4
19,45;22.5,44.5;28,44
20,42;23,41.4;26.5,41.5
25,31.6;25,22;37,22
25,22;24,20;24,19.5;15.9,23.4;14.3,22.6;12,23.5;9.5,26.2;9.8,30;11.5,33.2
9.5,30;7.7,33.3;8.5,36.8
12,23.5;5.8,19.4;3.2,19;1.2,21.1;-4.8,25;-8.7,27.3;-8.7,28.7;-5,30;-1.2,32.2;-2,35
-8.7,27.7;-13,27.7
-8.7,27.3;-8.7,26;-12,26;-12,23.4;-13,23;-13,21.3;-17,21.3
-4.8,25;-6.5,25;-5.5,15.5;-10,15.4;-12,14.8;-14,16.5;-16.4,16
4.2,19.2;4.2,16.5;.5,15;-3,13.7;-5.5,11;-5.5,10.3;-8,10.2;-11.4,12.2;-12.2,14.7
3.6,11.7;4.2,13.5;9,12.8;13.5,13.7;15.5,16.9;15.9,23.4
24,19.5;24,15.7;22.5,14;22.8,11;18.8,9;15.5,7.5
22.8,11;24,8.7;27.5,5;22.5,4.2;18.6,3.5;18,5;16,3
8.6,4.8;10,7;12.5,8;14.5,12.9
15.5,10;15.5,7.5;14.5,5;16.2,2.2;9.8,2.3
1.6,6.3;1.6,9;.9,11;3.6,11.7;2.7,9;2.7,6.4
-3,5.1;-2.8,9.6;-2.8,11;0,11;1,6
-7.5,4.4;-8.4,7.5;-11.4,6.9
-8,10.2;-8,7.5
-13.2,9;-10.5,8.4
38.6,18;36.5,14.3;34.3,10.6;33,8;35.8,4.8;38,3.6;41,4;42,4
36.5,14.3;40,14.4;42.4,12.5;42,11;43,9;48,8;45,5;42,4;41,-1.7
24,8.7;28,9.5;33,10;34.1,9
27.5,5;30.8,3.5;31,2;29.6,-1.4;29,-3
30.8,3.5;34,4.2;35.8,4.8
34,4.2;34,-1;30.5,-1
34,-1;37.6,-3;39.2,-4.7
9.8,1;13.3,2.2;14.4,-.5;12.5,-2.3;11.2,-3.9
18.6,3.5;17.5,0;16,-2.5;15,-4.5`;

// [colour, x, y, radius] in drawing order.
const R = '#c4162a', Y = '#f2cc0c', G = '#37872d';
const dots = [
  [G,926.7,251.7],[G,920.7,266],[G,1199,257.3],[G,1002.3,312],[G,1222.3,340],[Y,918.3,240.7],[Y,955,245],[Y,960.7,265],[Y,926,302],[Y,941,296],[G,999.5,310.5],
  [R,1199,299,46],[R,937.3,270,49.5],[R,906,257,17],[R,927.3,235,15],[R,889,281,19.5],
  [R,911,236.7,6],[R,915,238,5],[R,922.7,253,7.5],[R,938,252],[R,943.3,241],[R,957,230.7],[R,935,266],[R,940,255],[R,971,257],[R,963.3,284.3,6],[R,877,283],
  [G,905,271],[G,885,293.7],[Y,943.7,260.7],[Y,951,265],[Y,957,252.7],[Y,971,269],[Y,957,277],
  [R,849,159],[R,927.7,178.7,7.7],[R,942.7,178.7,6.5],[R,974,166],[R,974,196],[R,927.7,212,6.5],[R,877,225],
  [Y,967.7,212],[Y,971,207.3],[Y,980,227],[G,991,245],[Y,886,309],[Y,909,322],[Y,1000,284],
  [R,1002.3,302.7],[Y,993.7,299],[R,999.3,310.7],[Y,1023.7,273],[Y,1028,281],[Y,1035,279],[R,1024.7,305],[R,1036,318],[R,1028,332],[R,1044,328.7],[R,1046.7,330],
  [R,985,325],[Y,1061.7,344],[Y,1084.7,305],[Y,1099,315],[G,1092.7,249],[R,1119,347],[G,1139,322],[G,1157,324],[G,1156,335],[R,1225,340],
  [Y,1184,362],[Y,1199,368],[Y,1108,396],[Y,1130,383],[R,1195,401],[R,1220,398],[R,1241,419],[R,1293,295,6.5],
  [Y,859.7,365],[G,872,374],[G,894,368],[G,894,382],[G,902.7,382],[G,923,376],[G,933.7,388],[G,933,408],[G,1008,382],[G,1008,402],
  [R,598,211],[Y,610,337.7],[G,672,342],[Y,680,352],[G,654,362],[Y,661,376],[Y,672,379],[Y,695,394],[Y,680,411],[G,732,391],[Y,749,394],
  [G,723.7,355.7],[G,725,358.3],[G,725.7,362.7],[G,725.7,374]
];
const labels = [
  ['NORTH',599.5,247.7,53,0],['AMERICA',591,264.7,70,0],['NORTH',1623.5,247.7,53,0],['AMERICA',1615,264.7,70,0],
  ['AFRICA',951.5,383,54,0],['ASIA',1083,280.5,35,0],['ASIA',59,280.5,35,0],
  ['Atlantic',758.5,363.5,65,1],['Ocean',766,378.7,51,1],['Atlantic',1782.5,363.5,65,1],['Ocean',1790,378.7,51,1],
  ['Pacific',529,404.5,54,1],['Ocean',531,419.5,51,1],['Pacific',1553,404.5,54,1],['Ocean',1555,419.5,51,1]
];
const copies = id => [-1024, 0, 1024].map(dx => `<use href="#${id}" x="${dx}"/>`).join('');
document.getElementById('map').innerHTML =
  '<defs><filter id="coast" filterUnits="userSpaceOnUse" x="20" y="80" width="1840" height="354" color-interpolation-filters="sRGB">' +
  '<feTurbulence type="fractalNoise" baseFrequency=".17" numOctaves="3" seed="4" result="n"/>' +
  '<feDisplacementMap in="SourceGraphic" in2="n" scale="9" xChannelSelector="R" yChannelSelector="G"/></filter>' +
  `<path id="land" d="${toPath(land, true)}" fill="#0e0e0e" stroke="#0e0e0e" stroke-width=".8" stroke-linejoin="round"/>` +
  `<path id="water" d="${toPath(water, true)}" fill="#3b3b3b"/>` +
  `<path id="borders" d="${toPath(borders, false)}" fill="none" stroke="#323232" stroke-width="1"/></defs>` +
  '<rect x="34" y="94" width="1812" height="326" fill="#3b3b3b"/>' +
  `<g filter="url(#coast)">${copies('land')}${copies('water')}</g>${copies('borders')}` +
  labels.map(l => `<text x="${l[1]}" y="${l[2]}" textLength="${l[3]}" ${l[4] ? 'class="sea"' : 'lengthAdjust="spacingAndGlyphs"'}>${l[0]}</text>`).join('') +
  dots.map(d => `<circle cx="${d[1]}" cy="${d[2]}" r="${d[3] || 5}" fill="${d[0]}" fill-opacity=".5" stroke="${d[0]}" stroke-width="${d[3] > 10 ? 2.6 : 3}"/>`).join('');

const gauges = [['Ukraine | UKR',2,1],['Turkey | TUR',5,1],['Tunisia | TUN',16,1],['Trinidad and Tobago | TTO',1,1],['Togo | TGO',1,1],['Thailand | THA',39,1],['Switzerland | CHE',1124,36],['Sweden | SWE',812,26],['Sri Lanka | LKA',5,1],['Spain | ESP',4906,158]];
document.getElementById('gauges').innerHTML = gauges.map(g =>
  `<div class="gauge"><div class="gauge-label">[ ${g[0]} ] - ActiveCases</div><div class="gauge-track"><div class="gauge-fill${g[2] === 1 ? ' thin' : ''}" style="width:${g[2]}px"></div></div><div class="gauge-value">${g[1]}</div></div>`).join('');

const hexRows = [
  'AFG 0,ALB 1.00,AND 0,ARG 2.00,ARM 0,ATG 0','AUS 3.00,AUT 1.00,AZE 1.00,BEL 3.00,BFA 0,BGD 0','BGR 1.00,BHR 0,BIH 0,BLR 0,BRA 0,BTN 0',
  'CAN 1.00,CHE 11.00,CHL 0,CHN 3.18 K,CMR 0,COL 0','CRI 0,CUB 0,CYP 0,CZE 0,DEU 8.00,DNK 0','DZA 2.00,ECU 0,EGY 2.00,ESP 133.00,EST 0,ETH 0',
  'FIN 0,FRA 79.00,GAB 0,GEO 0,GHA 0,GIB 0','GIN 0,GLP 0,GRC 1.00,GUF 0,GUY 1.00,HKG 4.00','HND 0,HRV 0,HUN 0,IDN 4.00,IND 2.00,IRL 1.00',
  'IRQ 9.00,ISL 0,ISR 0,ITA 1.27 K,JAM 0,JOR 0','JPN 19.00,KAZ 0,KEN 0,KHM 0,KWT 0,LBN 3.00'
];
let hex = '<defs><linearGradient id="hg" x1="0" y1="0" x2="1" y2="1"><stop offset="0.3" stop-color="#f2495c"/><stop offset="0.8" stop-color="#a4323f"/></linearGradient></defs>';
let hexText = '';
hexRows.forEach((row, j) => row.split(',').forEach((cell, i) => {
  const x = 1028 + i * 37.6 + (j % 2) * 18.8, y = 567 + j * 32.6;
  const pts = [0, 1, 2, 3, 4, 5].map(k => [x + 21.7 * Math.sin(k * Math.PI / 3), y - 21.7 * Math.cos(k * Math.PI / 3)].map(v => v.toFixed(1)).join()).join(' ');
  const name = cell.slice(0, 3), value = cell.slice(4);
  hex += `<polygon points="${pts}" fill="url(#hg)" stroke="#ff7383" stroke-width="2.8"/>`;
  hexText += `<text x="${x}" y="${y}">${name}</text><text x="${x}" y="${y + 11}">${value}</text>`;
}));
document.getElementById('hexes').innerHTML = hex + hexText;
```
